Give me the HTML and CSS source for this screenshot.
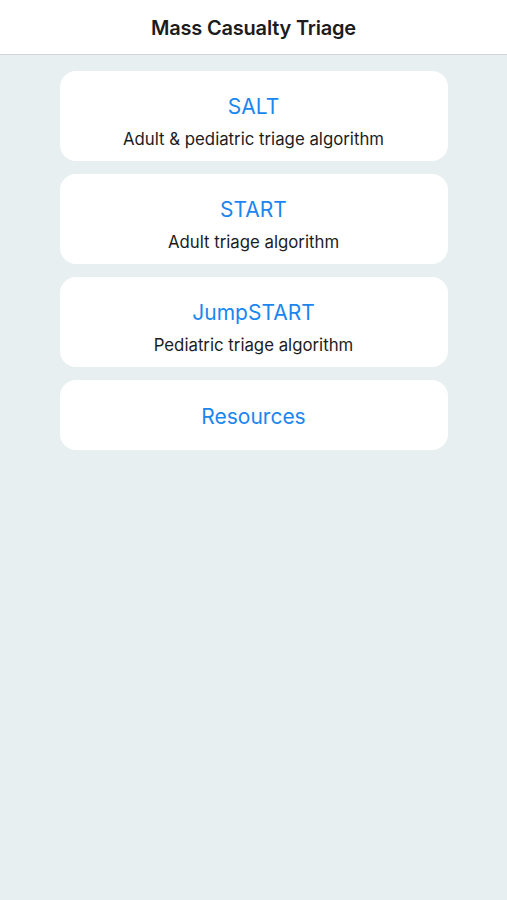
FILE: index.html
```html
<!DOCTYPE html>
<html lang="en">
<head>
<meta charset="utf-8">
<title>Mass Casualty Triage</title>
<link rel="stylesheet" href="styles.css">
</head>
<body>
<header class="navbar">
  <h1 class="nav-title">Mass Casualty Triage</h1>
</header>
<main class="list">
  <a class="card" href="#">
    <span class="card-title">SALT</span>
    <span class="card-sub">Adult &amp; pediatric triage algorithm</span>
  </a>
  <a class="card" href="#">
    <span class="card-title">START</span>
    <span class="card-sub">Adult triage algorithm</span>
  </a>
  <a class="card" href="#">
    <span class="card-title">JumpSTART</span>
    <span class="card-sub">Pediatric triage algorithm</span>
  </a>
  <a class="card card-single" href="#">
    <span class="card-title">Resources</span>
  </a>
</main>
</body>
</html>
```
FILE: styles.css
```css
* { box-sizing: border-box; }
html, body {
  margin: 0;
  padding: 0;
  height: 100%;
}
body {
  background: #e8eff0;
  font-family: Inter, "Noto Sans", "Liberation Sans", sans-serif;
  -webkit-font-smoothing: antialiased;
}
.navbar {
  height: 55px;
  background: #ffffff;
  border-bottom: 1px solid #d3d6d8;
  display: flex;
  align-items: center;
  justify-content: center;
  padding-top: 2px;
}
.nav-title {
  margin: 0;
  font-size: 20px;
  font-weight: 600;
  color: #1c1c1e;
  letter-spacing: -0.2px;
}
.list {
  display: flex;
  flex-direction: column;
  align-items: center;
  gap: 13px;
  padding-top: 16px;
}
.card {
  width: 388px;
  height: 90px;
  background: #ffffff;
  border-radius: 16px;
  text-decoration: none;
  display: flex;
  flex-direction: column;
  align-items: center;
  justify-content: flex-start;
  padding-top: 23px;
  gap: 10px;
}
.card-single {
  height: 70px;
  justify-content: center;
  padding-top: 2px;
}
.card-title {
  font-size: 21px;
  color: #1a86f0;
  line-height: 25px;
}
.card-sub {
  font-size: 16.8px;
  color: #1c1c1e;
  line-height: 20px;
}
```
